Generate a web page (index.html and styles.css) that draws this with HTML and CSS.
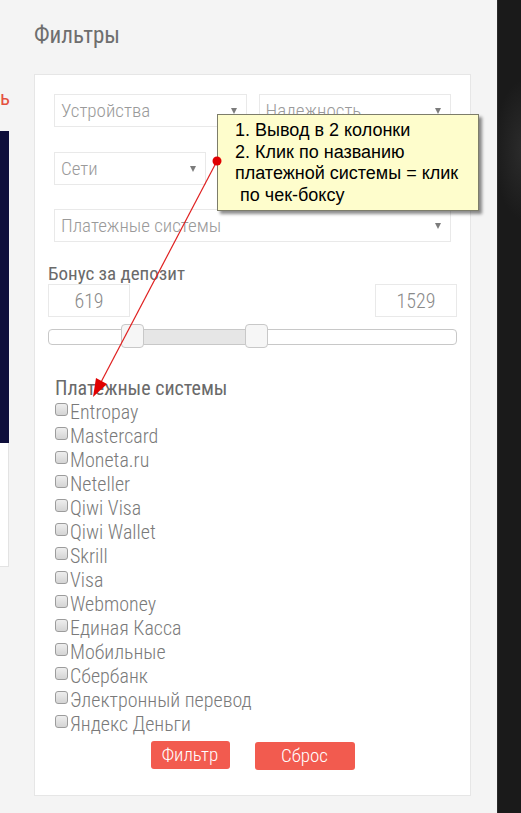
FILE: index.html
```html
<!DOCTYPE html>
<html lang="ru">
<head>
<meta charset="utf-8">
<title>Фильтры</title>
<link rel="stylesheet" href="styles.css">
</head>
<body>
<div class="page">
  <aside class="side">
    <div class="side-word">ь</div>
    <div class="side-banner"></div>
    <div class="side-panel"></div>
  </aside>
  <main class="main">
    <h1 class="title">Фильтры</h1>
    <section class="card">
      <div class="selects">
        <div class="sel-row">
          <div class="select"><span>Устройства</span><i class="caret"></i></div>
          <div class="select"><span>Надежность</span><i class="caret"></i></div>
        </div>
        <div class="sel-row sel-row-net">
          <div class="select select-narrow"><span>Сети</span><i class="caret"></i></div>
          <div class="select"><span>Лицензия</span><i class="caret"></i></div>
        </div>
        <div class="sel-row sel-row-full">
          <div class="select"><span>Платежные системы</span><i class="caret"></i></div>
        </div>
      </div>
      <div class="bonus-label">Бонус за депозит</div>
      <div class="range-values">
        <div class="num">619</div>
        <div class="num">1529</div>
      </div>
      <div class="slider">
        <div class="slider-fill"></div>
        <div class="handle handle-min"></div>
        <div class="handle handle-max"></div>
      </div>
      <div class="ps-title">Платежные системы</div>
      <ul class="ps-list">
        <li><span class="cb"></span>Entropay</li>
        <li><span class="cb"></span>Mastercard</li>
        <li><span class="cb"></span>Moneta.ru</li>
        <li><span class="cb"></span>Neteller</li>
        <li><span class="cb"></span>Qiwi Visa</li>
        <li><span class="cb"></span>Qiwi Wallet</li>
        <li><span class="cb"></span>Skrill</li>
        <li><span class="cb"></span>Visa</li>
        <li><span class="cb"></span>Webmoney</li>
        <li><span class="cb"></span>Единая Касса</li>
        <li><span class="cb"></span>Мобильные</li>
        <li><span class="cb"></span>Сбербанк</li>
        <li><span class="cb"></span>Электронный перевод</li>
        <li><span class="cb"></span>Яндекс Деньги</li>
      </ul>
      <div class="actions">
        <button class="btn btn-filter">Фильтр</button>
        <button class="btn btn-reset">Сброс</button>
      </div>
    </section>
  </main>
  <div class="strip"></div>
</div>

<div class="note">1. Вывод в 2 колонки<br>2. Клик по названию<br>платежной системы = клик<br>&nbsp;по чек-боксу</div>

<svg class="annot" width="521" height="813" viewBox="0 0 521 813">
  <line x1="217" y1="161" x2="99" y2="386" stroke="#e02020" stroke-width="1.2"/>
  <polygon points="93,397 107,384 96,378" fill="#e00000"/>
  <circle cx="217" cy="161" r="4.5" fill="#e00000"/>
</svg>
</body>
</html>
```

FILE: styles.css
```css
* { box-sizing: border-box; }

html, body {
  margin: 0;
  padding: 0;
}

body {
  position: relative;
  width: 521px;
  height: 813px;
  overflow: hidden;
  background: #f4f4f4;
  font-family: "Roboto Condensed", Roboto, "Liberation Sans", sans-serif;
}

.page {
  display: flex;
  height: 813px;
}

/* left cut-off column */
.side {
  width: 9px;
  flex: none;
  display: flex;
  flex-direction: column;
}

.side-word {
  margin-top: 86px;
  height: 25px;
  line-height: 25px;
  font-size: 21px;
  color: #e4513f;
  text-align: right;
  padding-right: 1px;
}

.side-banner {
  margin-top: 20px;
  height: 312px;
  background: #0f0f3b;
}

.side-panel {
  height: 124px;
  background: #fff;
  border-right: 1px solid #e3e3e3;
  border-bottom: 1px solid #e3e3e3;
}

/* main column */
.main {
  flex: 1;
  padding-left: 25px;
  padding-right: 26px;
}

.title {
  margin: 23px 0 25px;
  font-size: 23px;
  line-height: 26px;
  font-weight: 400;
  color: #6e6e6e;
}

.card {
  background: #fff;
  border: 1px solid #e6e6e6;
  padding: 0 13px 25px;
  height: 722px;
}

.selects {
  padding: 19px 6px 0;
  display: flex;
  flex-direction: column;
  gap: 24.5px;
}

.sel-row {
  display: flex;
  gap: 12px;
}

.sel-row-net { gap: 11px; }

.select {
  flex: 1;
  height: 33px;
  border: 1px solid #e9e9e9;
  display: flex;
  align-items: center;
  justify-content: space-between;
  padding: 0 9px 0 6px;
  font-size: 19px;
  font-weight: 300;
  color: #9a9a9a;
}

.select-narrow {
  flex: none;
  width: 152px;
}

.caret {
  width: 0;
  height: 0;
  border-left: 3.5px solid transparent;
  border-right: 3.5px solid transparent;
  border-top: 6px solid #7c7c7c;
  margin-top: 1px;
}

.bonus-label {
  margin-top: 21px;
  font-size: 19px;
  line-height: 21px;
  color: #6a6a6a;
}

.range-values {
  display: flex;
  justify-content: space-between;
}

.num {
  width: 82px;
  height: 33px;
  border: 1px solid #e9e9e9;
  display: flex;
  align-items: center;
  justify-content: center;
  font-size: 20px;
  font-weight: 300;
  color: #8a8a8a;
}

.slider {
  position: relative;
  margin-top: 12px;
  height: 16px;
  border: 1px solid #c8c8c8;
  border-radius: 4px;
  background: #fff;
}

.slider-fill {
  position: absolute;
  top: 0;
  bottom: 0;
  left: 83px;
  width: 124px;
  background: #e6e6e6;
}

.handle {
  position: absolute;
  top: -6px;
  width: 23px;
  height: 24px;
  border: 1px solid #c8c8c8;
  border-radius: 4px;
  background: #f6f6f6;
}

.handle-min { left: 72px; }
.handle-max { left: 196px; }

.ps-title {
  margin-top: 31px;
  padding-left: 7px;
  font-size: 20px;
  line-height: 24px;
  color: #6a6a6a;
}

.ps-list {
  list-style: none;
  margin: 0;
  padding: 0 0 0 7px;
}

.ps-list li {
  display: flex;
  align-items: center;
  height: 24px;
  font-size: 20px;
  font-weight: 300;
  color: #7a7a7a;
}

.cb {
  flex: none;
  width: 13px;
  height: 13px;
  margin: -6px 2px 0 0;
  border: 1px solid #9c9c9c;
  border-radius: 3px;
  background: linear-gradient(#eeeeee, #d4d4d4);
}

.actions {
  margin-top: 5px;
  display: flex;
  justify-content: center;
  gap: 25px;
}

.btn {
  height: 28px;
  border: none;
  border-radius: 3px;
  background: #f25b4f;
  color: #fff;
  font-family: inherit;
  font-size: 19px;
  font-weight: 300;
  line-height: 28px;
  padding: 0;
}

.btn-filter { width: 79px; }
.btn-reset { width: 100px; margin-top: 1px; }

/* right dark strip */
.strip {
  width: 24px;
  flex: none;
  background:
    radial-gradient(ellipse 30px 70px at 26px 150px, #2c2c2c, rgba(30,30,30,0) 100%),
    #1a1a1a;
  border-left: 1px solid #2a2a2a;
}

/* annotation overlay */
.note {
  position: absolute;
  left: 217px;
  top: 114px;
  width: 262px;
  height: 97px;
  padding: 5px 0 0 17px;
  background: #fefdcc;
  border: 1px solid #7d7d6a;
  box-shadow: 3px 3px 3px rgba(0, 0, 0, 0.45);
  font-family: "Liberation Sans", Arial, sans-serif;
  font-size: 18px;
  line-height: 21.5px;
  color: #000;
  white-space: nowrap;
}

.annot {
  position: absolute;
  left: 0;
  top: 0;
  pointer-events: none;
}
```
